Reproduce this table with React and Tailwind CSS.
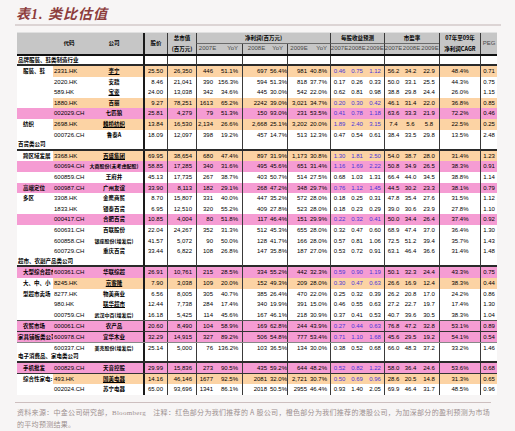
import React from "react";

const GRID =
  "grid grid-cols-[36px_32px_58px_24px_29px_22px_24px_28px_17px_23px_20px_18px_18px_18px_18px_19px_18px_41px_17px]";
const ORANGE = "bg-[#fcd3a4]";
const PINK = "bg-[#f59cd3]";
const NUM = "font-['Liberation_Sans_Narrow','Liberation_Sans',Arial,sans-serif] text-[6px]";
const CJK = "font-['Noto_Sans_CJK_SC',sans-serif] font-bold text-[5.5px]";
const CJKS = "font-['Noto_Sans_CJK_SC',sans-serif] font-bold text-[5px]";
const VL = "border-l border-[#3a3a3a]";
const VL2 = "border-l-2 border-[#1a1a1a]";

const colCls = [
  "pl-[6px] text-left",
  "pl-[1px] text-left",
  "text-center",
  `${VL2} text-right pr-[4px]`,
  `${VL} text-right pr-[4px]`,
  `${VL} text-right pr-[5px]`,
  "text-right pr-[4px]",
  `${VL} text-right pr-[3px]`,
  "text-right pr-[4px]",
  `${VL} text-right pr-[3px]`,
  "text-right pr-[3px]",
  `${VL} text-center`,
  "text-center",
  "text-center",
  `${VL} text-center`,
  "text-center pr-[2px]",
  "text-center pr-[2px]",
  `${VL} text-center`,
  `${VL} text-center`,
];

const rows = [
  { s: "品牌服装、鞋类制造行业" },
  { cat: "服装、鞋", code: "2331.HK", name: "李宁", u: 1, hl: "o", v: ["25.50", "26,350", "446", "51.1%", "697", "56.4%", "981", "40.8%", "0.46", "0.75", "1.12", "56.2", "34.2", "22.9", "48.4%", "0.71"] },
  { code: "2020.HK", name: "安踏", v: ["8.46", "21,041", "390", "156.3%", "594", "51.3%", "818", "37.7%", "0.17", "0.26", "0.33", "50.0", "33.1", "25.5", "44.3%", "0.75"] },
  { code: "589.HK", name: "宝姿", u: 1, v: ["24.00", "13,038", "342", "34.6%", "445", "30.0%", "542", "22.0%", "0.62", "0.81", "0.98", "38.8", "29.8", "24.4", "26.0%", "1.15"] },
  { code: "1880.HK", name: "百丽", hl: "o", v: ["9.27", "78,251", "1613", "65.2%", "2242", "39.0%", "3,021", "34.7%", "0.20", "0.30", "0.42", "46.1", "31.4", "22.0", "36.8%", "0.85"] },
  { code: "002029.CH", name: "七匹狼", hl: "p", v: ["25.81", "4,279", "79", "51.3%", "150", "93.0%", "231", "53.5%", "0.41", "0.78", "1.18", "63.6", "33.3", "21.9", "72.2%", "0.46"] },
  { cat: "纺织", code: "2698.HK", name: "魏桥纺织", u: 1, hl: "o", v: ["13.84", "16,530", "2,134", "26.6%", "2,668", "25.1%", "3,202", "20.0%", "1.89", "2.40", "3.15", "7.4", "5.6", "5.8", "22.5%", "0.25"] },
  { code: "000726.CH", name: "鲁泰A", v: ["18.09", "12,097", "398", "19.2%", "457", "14.7%", "513", "12.3%", "0.47", "0.54", "0.61", "38.4", "33.5", "29.8", "13.5%", "2.48"] },
  { s: "百货类公司" },
  { cat: "跨区域发展", code: "3368.HK", name: "百盛集团", u: 1, hl: "o", v: ["69.95", "38,654", "680", "47.4%", "897", "31.9%", "1,173", "30.8%", "1.30", "1.81", "2.50", "54.0", "38.7", "28.0", "31.4%", "1.23"] },
  { code: "600694.CH", name: "大商股份(未考虑配股)", sm: 1, hl: "p", v: ["58.85", "17,285", "340", "31.6%", "495", "45.6%", "651", "31.4%", "1.16", "1.69", "2.22", "50.8", "34.9", "26.5", "38.3%", "0.91"] },
  { code: "600859.CH", name: "王府井", v: ["45.13", "17,735", "267", "38.7%", "403", "50.7%", "514", "27.5%", "0.68", "1.03", "1.31", "66.4", "44.0", "34.5", "38.8%", "1.14"] },
  { cat: "高端定位", code: "000987.CH", name: "广州友谊", hl: "p", v: ["33.90", "8,113", "182", "29.1%", "268", "47.2%", "348", "29.7%", "0.76", "1.12", "1.45", "44.5", "30.2", "23.3", "38.1%", "0.79"] },
  { cat: "多区", code: "3308.HK", name: "金鹰商贸", v: ["8.70", "15,807", "331", "40.0%", "447", "35.2%", "572", "28.0%", "0.18", "0.25", "0.31", "47.8", "35.4", "27.6", "31.5%", "1.12"] },
  { code: "1833.HK", name: "银泰百货", v: ["6.95", "12,510", "320", "55.2%", "409", "27.8%", "523", "28.0%", "0.18", "0.23", "0.29", "39.0", "30.6", "23.9", "27.8%", "1.10"] },
  { code: "000417.CH", name: "合肥百货", hl: "p", v: ["10.85", "4,004", "80", "51.8%", "117", "46.4%", "151", "29.9%", "0.22", "0.32", "0.41", "50.0", "34.4", "26.4", "37.4%", "0.92"] },
  { code: "600631.CH", name: "百联股份", v: ["22.04", "24,267", "352", "31.3%", "512", "45.3%", "655", "28.0%", "0.32", "0.47", "0.60", "68.9", "47.4", "37.0", "36.4%", "1.30"] },
  { code: "600858.CH", name: "银座股份(增发后)", sm: 1, v: ["41.57", "5,072", "90", "50.0%", "128", "41.7%", "166", "28.0%", "0.57", "0.81", "1.06", "72.5", "51.2", "39.4", "35.7%", "1.43"] },
  { code: "600729.CH", name: "重庆百货", v: ["33.44", "6,822", "108", "26.8%", "147", "35.8%", "187", "27.0%", "0.53", "0.72", "0.91", "63.1", "46.4", "36.6", "31.4%", "1.48"] },
  { s: "超市、农副产品类公司" },
  { cat: "大型综合超市", code: "600361.CH", name: "华联综超", hl: "p", v: ["26.91", "10,761", "215", "28.5%", "334", "55.2%", "442", "32.3%", "0.59", "0.90", "1.19", "50.1", "32.3", "24.4", "43.3%", "0.75"] },
  { cat: "大、中、小", code: "8245.HK", name: "京客隆", u: 1, hl: "o", v: ["7.90", "3,038", "109", "20.0%", "152", "49.3%", "209", "28.0%", "0.30", "0.47", "0.63", "26.6", "16.9", "12.4", "38.3%", "0.44"] },
  { cat: "型超市卖场", code: "8277.HK", name: "物美商业", v: ["6.56", "8,005", "305", "40.7%", "385", "26.4%", "470", "22.0%", "0.25", "0.32", "0.39", "26.2", "20.8", "17.0", "24.2%", "0.86"] },
  { code: "980.HK", name: "联华超市", u: 1, v: ["12.44", "7,738", "284", "17.4%", "340", "19.9%", "391", "15.0%", "0.46", "0.55", "0.63", "27.2", "22.7", "19.7", "17.4%", "1.30"] },
  { code: "000759.CH", name: "武汉中百(增发后)", sm: 1, v: ["16.18", "5,425", "114", "45.6%", "167", "46.1%", "218", "30.9%", "0.37", "0.41", "0.53", "40.7", "39.6", "30.5", "38.3%", "1.04"] },
  { cat: "农贸市场", code: "000061.CH", name: "农产品", hl: "p", top: "border-t border-[#555]", v: ["20.60", "8,490", "104", "58.9%", "169", "62.8%", "244", "43.9%", "0.27", "0.44", "0.63", "76.8", "47.2", "32.8", "53.1%", "0.89"] },
  { cat: "家具铺板类公司", catPad: "pl-[1px]", code: "600978.CH", name: "宜华木业", hl: "p", top: "border-t border-[#333]", v: ["32.29", "14,915", "327", "89.2%", "506", "54.8%", "777", "53.4%", "0.71", "1.10", "1.68", "45.6", "29.5", "19.2", "54.1%", "0.54"] },
  { code: "600337.CH", name: "美克股份(增发后)", sm: 1, top: "border-t border-[#888]", v: ["25.14", "5,000", "76", "136.2%", "103", "36.5%", "134", "30.0%", "0.38", "0.52", "0.68", "66.0", "48.3", "37.2", "33.2%", "1.46"] },
  { s: "电子消费品、家电类公司" },
  { cat: "手机批发", code: "000829.CH", name: "天音控股", hl: "p", v: ["29.99", "15,836", "273", "90.5%", "435", "59.2%", "644", "48.2%", "0.52", "0.82", "1.22", "58.0", "36.4", "24.6", "53.6%", "0.68"] },
  { cat: "综合性家电:", code: "493.HK", name: "国美电器", u: 1, hl: "o", top: "border-t border-[#333]", v: ["14.16", "46,146", "1677", "92.5%", "2081", "32.0%", "2,721", "30.7%", "0.50", "0.69", "0.96", "28.6", "20.5", "14.8", "31.3%", "0.65"] },
  { code: "002024.CH", name: "苏宁电器", v: ["65.00", "93,696", "1341", "86.1%", "2018", "50.5%", "2955", "46.4%", "0.93", "1.40", "2.05", "69.9", "46.4", "31.7", "48.5%", "0.96"] },
];

function SectionRow({ label }) {
  return (
    <div className={`${GRID} h-[10.6px] border-b-2 border-[#2a2a2a] bg-white`}>
      <div className={`col-span-3 pl-[1px] leading-[9px] whitespace-nowrap ${CJK} text-black`}>{label}</div>
      {colCls.slice(3).map((c, i) => (
        <div key={i} className={c} />
      ))}
    </div>
  );
}

function DataRow({ r }) {
  const hl = r.hl === "o" ? ORANGE : r.hl === "p" ? PINK : "bg-white";
  const cells = [r.cat || "", r.code, r.name, ...r.v];
  return (
    <div className={`${GRID} h-[10.6px] ${r.top || ""}`}>
      {cells.map((v, i) => {
        let bg = hl;
        if (i === 0) bg = r.hl === "p" ? PINK : "bg-white";
        let font = NUM + " text-black";
        if (i === 0) font = CJK + " text-black";
        if (i === 2) font = (r.sm ? CJKS : CJK) + " text-black";
        if (i >= 11 && i <= 13 && r.hl) font = NUM + " text-[#4a36d8]";
        let cls = colCls[i];
        if (i === 0 && r.catPad) cls = "text-left " + r.catPad;
        return (
          <div
            key={i}
            className={`${cls} ${bg} ${font} leading-[10px] whitespace-nowrap`}
          >
            {i === 2 && r.u ? <span className="underline underline-offset-[1px]">{v}</span> : v}
          </div>
        );
      })}
    </div>
  );
}

const HC = "bg-[#c6c6c6] flex items-center justify-center whitespace-nowrap";
const HCJK = "font-['Noto_Sans_CJK_SC',sans-serif] font-bold text-[5.5px] text-black";
const HSUB = "font-['Liberation_Sans_Narrow','Liberation_Sans',Arial,sans-serif] text-[6px] text-[#4a4a4a]";

function Header() {
  return (
    <div className={`${GRID} grid-rows-[11px_9.5px] border-b-2 border-[#111] border-t border-t-[#e0e0e0]`}>
      <div className={`${HC} col-start-1 row-start-1 row-span-2`} />
      <div className={`${HC} ${HCJK} col-start-2 row-start-1 row-span-2`}>代码</div>
      <div className={`${HC} ${HCJK} col-start-3 row-start-1 row-span-2`}>公司</div>
      <div className={`${HC} ${HCJK} ${VL2} col-start-4 row-start-1 row-span-2`}>股价</div>
      <div className={`${HC} ${HCJK} ${VL} col-start-5 row-start-1`}>总市值</div>
      <div className={`${HC} ${HCJK} ${VL} col-start-5 row-start-2`}>(百万元)</div>
      <div className={`${HC} ${HCJK} ${VL} col-start-6 col-span-6 row-start-1 border-b border-b-[#6a6a6a]`}>净利润(百万元)</div>
      <div className={`${HC} ${HSUB} ${VL} col-start-6 row-start-2`}>2007E</div>
      <div className={`${HC} ${HSUB} col-start-7 row-start-2 !justify-end pr-[4px]`}>YoY</div>
      <div className={`${HC} ${HSUB} ${VL} col-start-8 row-start-2`}>2008E</div>
      <div className={`${HC} ${HSUB} col-start-9 row-start-2 !justify-end pr-[4px]`}>YoY</div>
      <div className={`${HC} ${HSUB} ${VL} col-start-10 row-start-2`}>2009E</div>
      <div className={`${HC} ${HSUB} col-start-11 row-start-2 !justify-end pr-[3px]`}>YoY</div>
      <div className={`${HC} ${HCJK} ${VL} col-start-12 col-span-3 row-start-1 border-b border-b-[#6a6a6a]`}>每股收益预测</div>
      <div className={`${HC} ${HSUB} ${VL} col-start-12 row-start-2`}>2007E</div>
      <div className={`${HC} ${HSUB} col-start-13 row-start-2`}>2008E</div>
      <div className={`${HC} ${HSUB} col-start-14 row-start-2`}>2009E</div>
      <div className={`${HC} ${HCJK} ${VL} col-start-15 col-span-3 row-start-1 border-b border-b-[#6a6a6a]`}>市盈率</div>
      <div className={`${HC} ${HSUB} ${VL} col-start-15 row-start-2`}>2007E</div>
      <div className={`${HC} ${HSUB} col-start-16 row-start-2`}>2008E</div>
      <div className={`${HC} ${HSUB} col-start-17 row-start-2`}>2009E</div>
      <div className={`${HC} ${HCJK} ${VL} col-start-18 row-start-1`}>07年至09年</div>
      <div className={`${HC} ${HCJK} ${VL} col-start-18 row-start-2`}>净利润CAGR</div>
      <div className={`${HC} ${HSUB} ${VL} col-start-19 row-start-1 row-span-2`}>PEG</div>
    </div>
  );
}

export default function App() {
  return (
    <div className="w-[515px] h-[431px] bg-[#f7f5f5] overflow-hidden">
      <div className="pt-[7px] pl-[16px] h-[24px] font-['Liberation_Serif','Noto_Sans_CJK_SC',serif] italic font-bold text-[14px] leading-[16px] tracking-[1px] text-[#8d3d3d]">
        表1. 类比估值
      </div>
      <div className="ml-[15px] w-[486px] h-[2px] bg-[#dcd4d4]" />
      <div className="ml-[17px] mt-[6px] w-[480px] bg-white">
        <Header />
        {rows.map((r, i) =>
          r.s ? <SectionRow key={i} label={r.s} /> : <DataRow key={i} r={r} />
        )}
      </div>
      <div className="ml-[15px] mt-[7px] w-[476px] h-px bg-[#cdbfbf]" />
      <div className="ml-[17px] mt-[4px] font-['Noto_Sans_CJK_SC',sans-serif] text-[7px] leading-[11px] text-[#9d9090] whitespace-nowrap tracking-[0.3px]">
        <div>
          资料来源：中金公司研究部，<span className="font-['Liberation_Serif',serif]">Bloomberg</span>　注释：红色部分为我们推荐的 A 股公司，橙色部分为我们推荐的港股公司，为加深部分的盈利预测为市场
        </div>
        <div>的平均预测结果。</div>
      </div>
    </div>
  );
}
